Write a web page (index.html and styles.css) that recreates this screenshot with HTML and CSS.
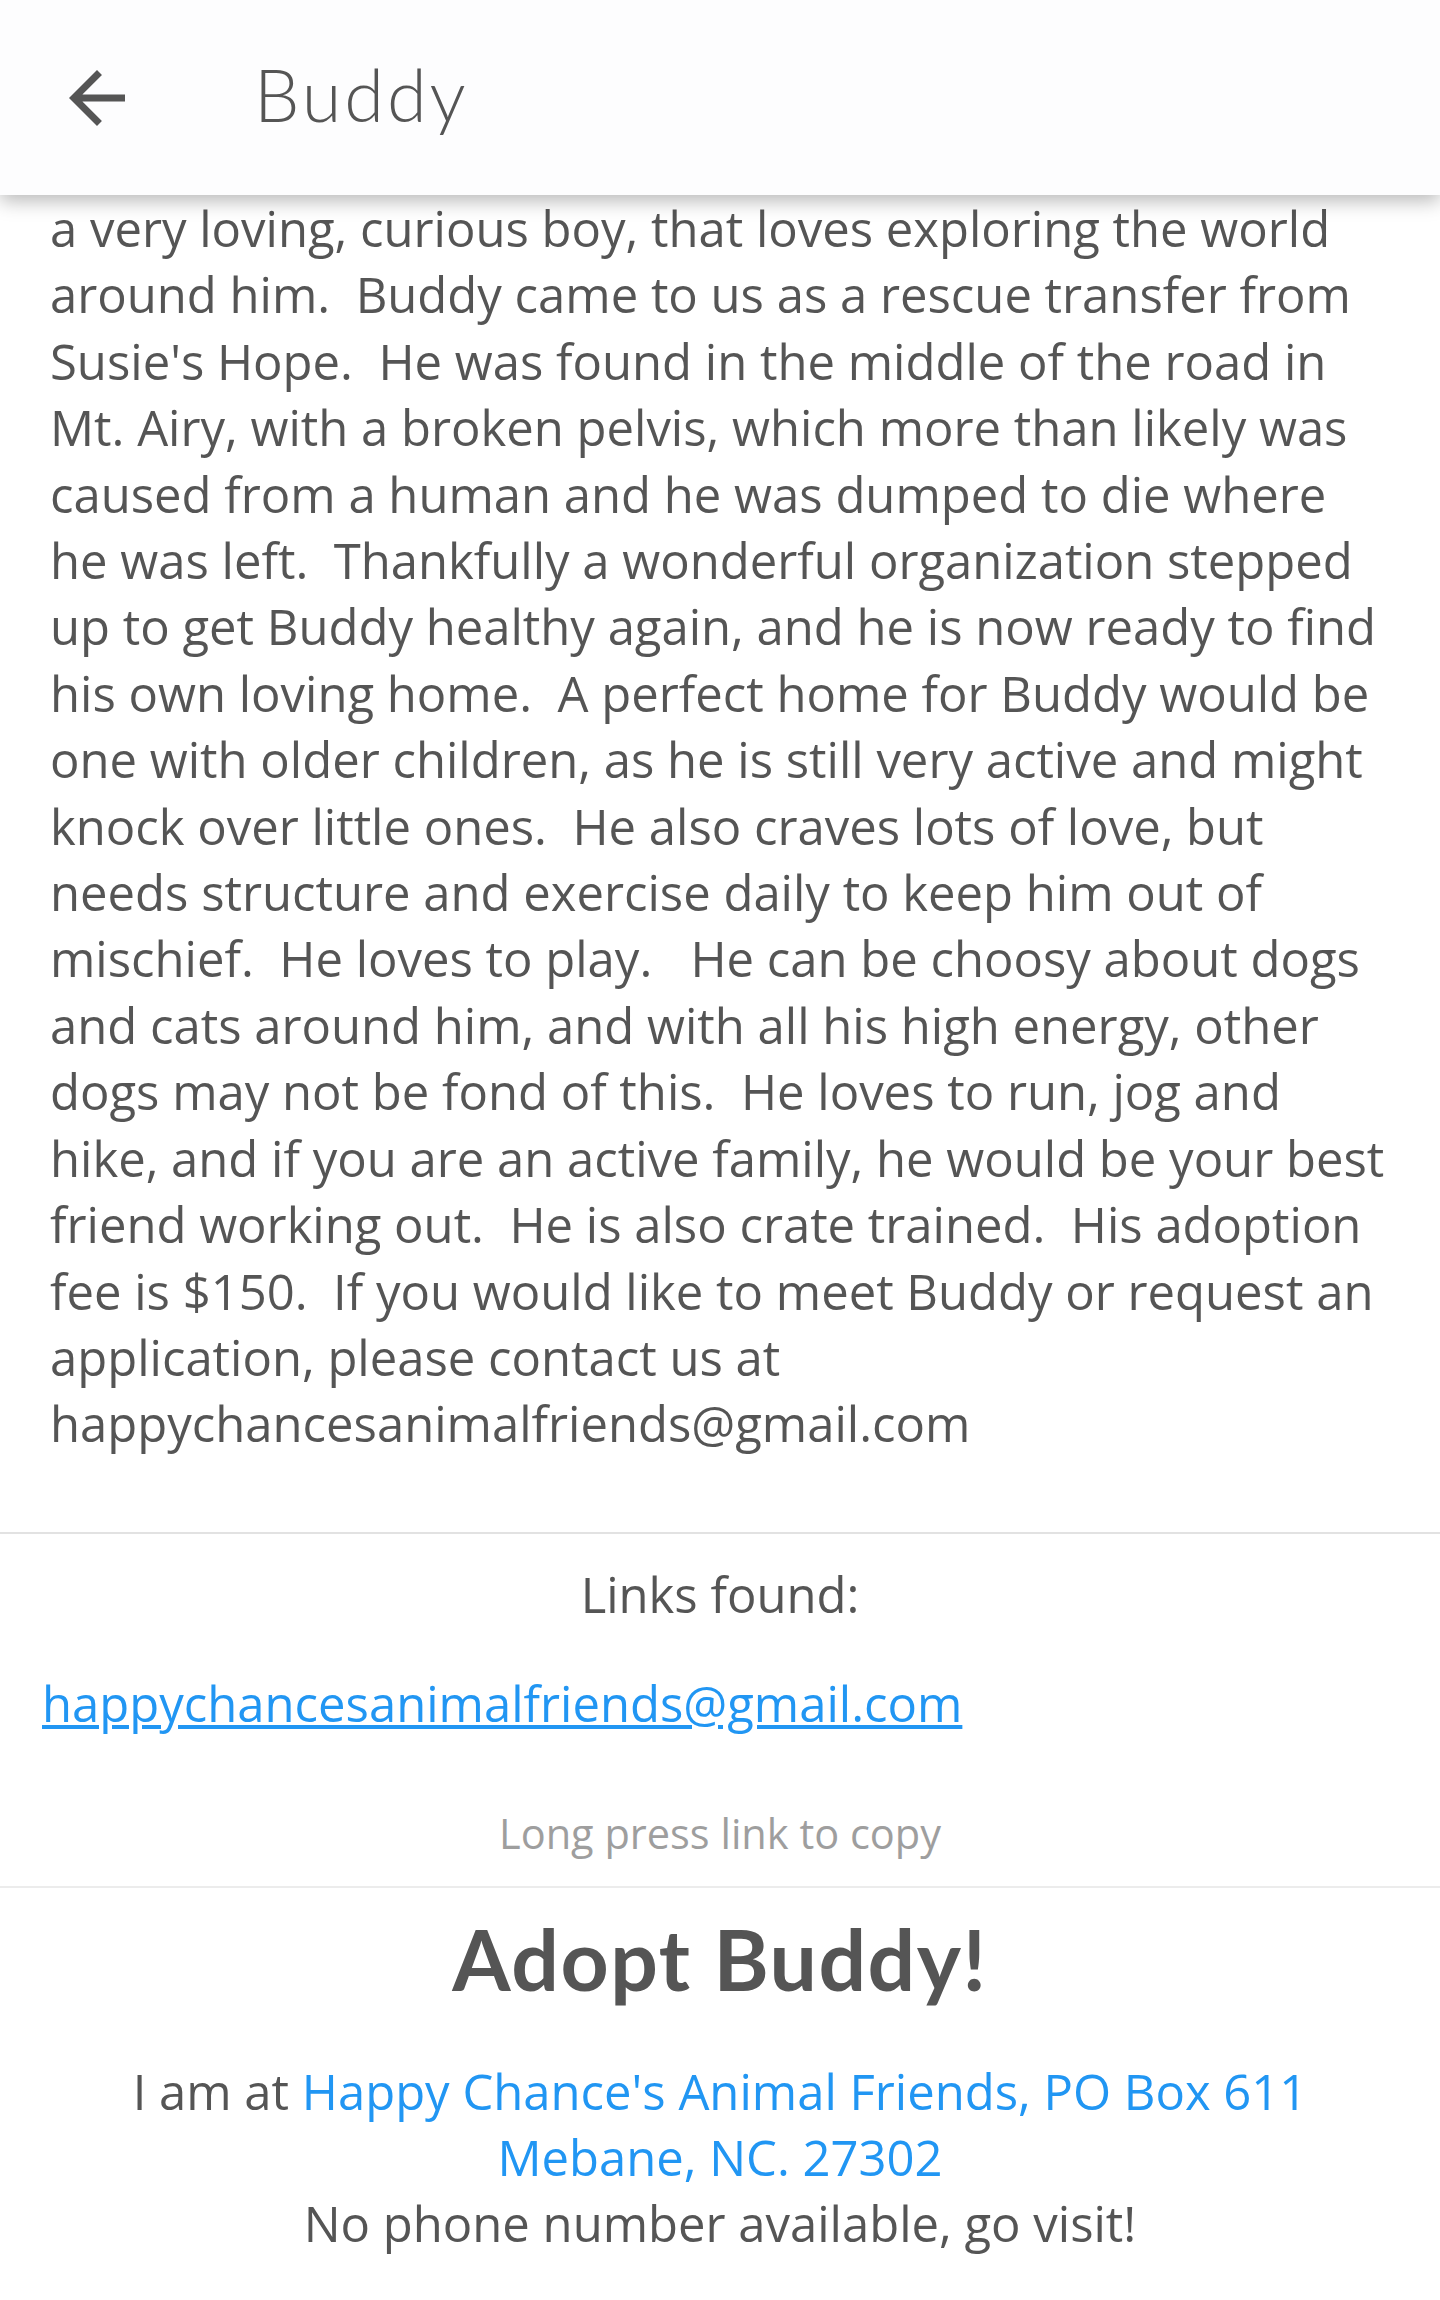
FILE: index.html
```html
<!DOCTYPE html>
<html lang="en">
<head>
<meta charset="utf-8">
<title>Buddy</title>
<link rel="stylesheet" href="styles.css">
</head>
<body>
<header class="appbar">
  <button class="back" aria-label="Back">
    <svg viewBox="0 0 24 24" width="84" height="84"><path d="M20 11H7.83l5.59-5.59L12 4l-8 8 8 8 1.41-1.41L7.83 13H20v-2z" fill="#555"/></svg>
  </button>
  <h1 class="title">Buddy</h1>
</header>
<main>
  <section class="story">
    <p>a very loving, curious boy, that loves exploring the world around him.&nbsp; Buddy came to us as a rescue transfer from Susie's Hope.&nbsp; He was found in the middle of the road in Mt. Airy, with a broken pelvis, which more than likely was caused from a human and he was dumped to die where he was left.&nbsp; Thankfully a wonderful organization stepped up to get Buddy healthy again, and he is now ready to find his own loving home.&nbsp; A perfect home for Buddy would be one with older children, as he is still very active and might knock over little ones.&nbsp; He also craves lots of love, but needs structure and exercise daily to keep him out of mischief.&nbsp; He loves to play.&nbsp;&nbsp; He can be choosy about dogs and cats around him, and with all his high energy, other dogs may not be fond of this.&nbsp; He loves to run, jog and hike, and if you are an active family, he would be your best friend working out.&nbsp; He is also crate trained.&nbsp; His adoption fee is $150.&nbsp; If you would like to meet Buddy or request an application, please contact us at happychancesanimalfriends@gmail.com</p>
  </section>
  <section class="links">
    <p class="links-title">Links found:</p>
    <a class="found-link" href="#">happychancesanimalfriends@gmail.com</a>
    <p class="hint">Long press link to copy</p>
  </section>
  <section class="adopt">
    <h2 class="adopt-title">Adopt Buddy!</h2>
    <p class="where">I am at <a href="#">Happy Chance's Animal Friends, PO Box 611 Mebane, NC. 27302</a></p>
    <p class="phone">No phone number available, go visit!</p>
  </section>
</main>
</body>
</html>
```
FILE: styles.css
```css
* { box-sizing: border-box; }
html, body { margin: 0; padding: 0; background: #fff; }
body { font-family: "Open Sans", "Liberation Sans", sans-serif; color: #555; }

.appbar {
  position: relative;
  z-index: 2;
  height: 195px;
  background: #fdfdfe;
  display: flex;
  align-items: center;
  box-shadow: 0 6px 18px rgba(0,0,0,0.28);
}
.back {
  border: 0;
  background: none;
  padding: 0;
  margin: 0 0 0 55px;
  width: 84px;
  height: 84px;
  display: flex;
}
.title {
  margin: 0 0 8px 115px;
  font-family: "Lato", "Open Sans", sans-serif;
  font-weight: 300;
  font-size: 72px;
  letter-spacing: 3px;
  color: #555;
  line-height: 1;
}

.story { padding: 0 50px 0 50px; }
.story p {
  margin: 0;
  font-size: 49px;
  line-height: 66.4px;
  padding-bottom: 75px;
}

.links {
  border-top: 2px solid #e2e2e2;
  border-bottom: 2px solid #ececec;
  display: flex;
  flex-direction: column;
  align-items: center;
  padding: 27px 0 23px;
}
.links-title { margin: 0; font-size: 49px; line-height: 66px; }
.found-link {
  align-self: flex-start;
  margin: 43px 0 0 42px;
  font-size: 49px;
  line-height: 66px;
  color: #2196f3;
}
.hint { margin: 67px 0 0; font-size: 41.5px; line-height: 60px; color: #9e9e9e; }

.adopt { text-align: center; padding: 21px 60px 40px; }
.adopt-title {
  margin: 0;
  font-family: "Lato", "Open Sans", sans-serif;
  font-weight: 700;
  font-size: 84px;
  letter-spacing: 1.5px;
  line-height: 100px;
  color: #555;
}
.where, .phone { margin: 0; font-size: 49px; line-height: 66px; }
.where { margin-top: 49px; }
.where a { color: #2196f3; text-decoration: none; }
```
